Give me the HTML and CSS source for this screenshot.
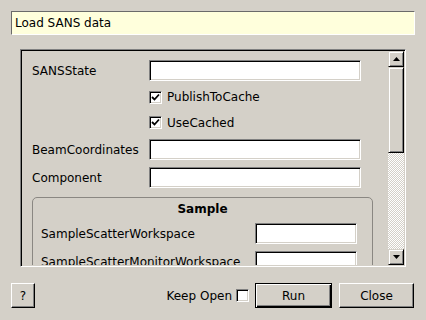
FILE: index.html
```html
<!DOCTYPE html>
<html>
<head>
<meta charset="utf-8">
<link rel="stylesheet" href="styles.css">
</head>
<body>
<div class="dialog">
  <div class="title">Load SANS data</div>
  <div class="frame">
    <div class="viewport">
      <div class="form">
        <div class="row"><span class="label">SANSState</span><span class="input"></span></div>
        <div class="cbrow r1"><span class="cb"><svg width="9" height="9" viewBox="0 0 9 9"><path d="M1 4 L3.5 6.5 L8 1.5" fill="none" stroke="#000" stroke-width="1.8"/></svg></span><span class="cbtext">PublishToCache</span></div>
        <div class="cbrow r2"><span class="cb"><svg width="9" height="9" viewBox="0 0 9 9"><path d="M1 4 L3.5 6.5 L8 1.5" fill="none" stroke="#000" stroke-width="1.8"/></svg></span><span class="cbtext">UseCached</span></div>
        <div class="row"><span class="label">BeamCoordinates</span><span class="input"></span></div>
        <div class="row last"><span class="label">Component</span><span class="input"></span></div>
        <div class="group">
          <div class="gtitle">Sample</div>
          <div class="grow"><span class="glabel">SampleScatterWorkspace</span><span class="input small"></span></div>
          <div class="grow"><span class="glabel">SampleScatterMonitorWorkspace</span><span class="input small"></span></div>
        </div>
      </div>
    </div>
    <div class="scrollbar">
      <div class="sbtn"><svg width="7" height="4" viewBox="0 0 7 4"><polygon points="3.5,0 7,4 0,4" fill="#000"/></svg></div>
      <div class="thumb"></div>
      <div class="track"></div>
      <div class="sbtn"><svg width="7" height="4" viewBox="0 0 7 4"><polygon points="0,0 7,0 3.5,4" fill="#000"/></svg></div>
    </div>
  </div>
  <div class="buttons">
    <div class="btn help">?</div>
    <div class="spacer"></div>
    <span class="keep">Keep Open</span>
    <span class="cb keepcb"></span>
    <div class="btn run">Run</div>
    <div class="btn close">Close</div>
  </div>
</div>
</body>
</html>
```
FILE: styles.css
```css
html, body {
  margin: 0;
  padding: 0;
  background: #d4d0c8;
}
body {
  width: 426px;
  height: 320px;
  overflow: hidden;
  font-family: "DejaVu Sans", sans-serif;
  font-size: 12px;
  color: #000;
}
.dialog {
  padding-top: 11px;
}
.title {
  margin: 0 11px;
  height: 24px;
  box-sizing: border-box;
  border: 1px solid;
  border-color: #6a6a6a #fff #fff #6a6a6a;
  background: #ffffdc;
  padding: 1px 0 0 3px;
  line-height: 21px;
}
.frame {
  margin: 14px 20px 0 20px;
  height: 218px;
  box-sizing: border-box;
  border: 1px solid;
  border-color: #808080 #fff #fff #808080;
  box-shadow: inset 1px 1px #000, inset -1px -1px #d4d0c8;
  padding: 1px;
  display: flex;
}
.viewport {
  flex: 1;
  overflow: hidden;
  height: 214px;
}
.form {
  padding: 9px 0 0 10px;
}
.row {
  display: flex;
  align-items: center;
  height: 21px;
  margin-bottom: 7px;
}
.row.last {
  margin-bottom: 9px;
}
.label {
  width: 117px;
}
.input {
  display: block;
  width: 212px;
  height: 21px;
  box-sizing: border-box;
  border: 1px solid;
  border-color: #808080 #fff #fff #808080;
  box-shadow: inset 1px 1px #000, inset -1px -1px #d4d0c8;
  background: #fff;
}
.input.small {
  width: 102px;
}
.cbrow {
  display: flex;
  align-items: center;
  padding-left: 117px;
  margin-bottom: 7px;
}
.cbrow.r1 { height: 18px; }
.cbrow.r2 { height: 19px; }
.cb {
  display: flex;
  flex-shrink: 0;
  align-items: center;
  justify-content: center;
  width: 13px;
  height: 13px;
  box-sizing: border-box;
  border: 1px solid;
  border-color: #808080 #fff #fff #808080;
  box-shadow: inset 1px 1px #000, inset -1px -1px #d4d0c8;
  background: #fff;
}
.cbtext {
  margin-left: 5px;
}
.group {
  width: 341px;
  box-sizing: border-box;
  border: 1px solid #8a8782;
  border-radius: 5px;
  padding: 0 0 0 8px;
}
.gtitle {
  font-weight: bold;
  text-align: center;
  height: 22px;
  line-height: 22px;
  margin-bottom: 3px;
  padding-right: 8px;
}
.grow {
  display: flex;
  align-items: center;
  height: 21px;
  margin-bottom: 7px;
}
.glabel {
  width: 214px;
  white-space: nowrap;
}
.scrollbar {
  width: 16px;
  display: flex;
  flex-direction: column;
}
.sbtn, .thumb {
  box-sizing: border-box;
  border: 1px solid;
  border-color: #d4d0c8 #000 #000 #d4d0c8;
  box-shadow: inset 1px 1px #fff, inset -1px -1px #808080;
  background: #d4d0c8;
}
.sbtn {
  height: 16px;
  display: flex;
  align-items: center;
  justify-content: center;
}
.thumb {
  height: 86px;
}
.track {
  height: 96px;
  background: repeating-conic-gradient(#fff 0 25%, #d4d0c8 0 50%) 0 0 / 2px 2px;
}
.buttons {
  display: flex;
  align-items: center;
  margin: 16px 12px 0 11px;
  height: 25px;
}
.spacer {
  flex: 1;
}
.btn {
  flex-shrink: 0;
  height: 25px;
  box-sizing: border-box;
  border: 1px solid;
  border-color: #fff #000 #000 #fff;
  box-shadow: inset -1px -1px #808080;
  display: flex;
  align-items: center;
  justify-content: center;
}
.help {
  width: 24px;
}
.keep {
  flex-shrink: 0;
  white-space: nowrap;
  margin-right: 4px;
}
.keepcb {
  margin-right: 6px;
}
.run {
  width: 77px;
  border-color: #000;
  box-shadow: inset 1px 1px #fff, inset -1px -1px #000, inset -2px -2px #808080;
}
.close {
  width: 75px;
  margin-left: 7px;
}
```
